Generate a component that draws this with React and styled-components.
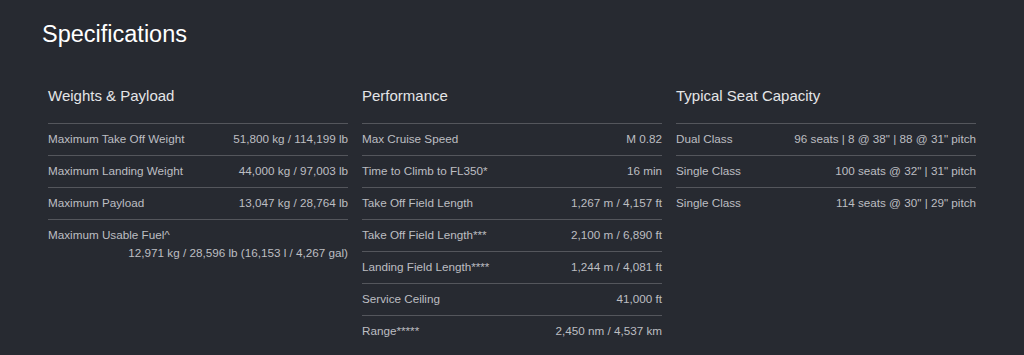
import React from "react";
import styled, { createGlobalStyle } from "styled-components";

const Global = createGlobalStyle`
  html, body { margin: 0; padding: 0; background: #272a31; }
  body { font-family: "Liberation Sans", Arial, sans-serif; }
`;

const Page = styled.div`
  width: 1024px;
  height: 355px;
  box-sizing: border-box;
  padding: 20px 42px 0;
  background: #272a31;
  overflow: hidden;
`;

const Title = styled.h1`
  margin: 0;
  font-size: 23.5px;
  line-height: 28px;
  font-weight: 400;
  color: #ffffff;
`;

const Grid = styled.div`
  display: grid;
  grid-template-columns: repeat(3, 300px);
  column-gap: 14px;
  padding-left: 6px;
  margin-top: 39px;
  align-items: start;
`;

const Section = styled.section`
  display: flex;
  flex-direction: column;
`;

const Heading = styled.h2`
  margin: 0 0 18px;
  font-size: 15px;
  line-height: 18px;
  font-weight: 400;
  color: #e4e5e7;
`;

const Row = styled.div`
  display: flex;
  flex-wrap: wrap;
  justify-content: space-between;
  border-top: 1px solid #54565c;
  padding: 6px 0 7px;
  font-size: 11.7px;
  line-height: 18px;
  color: #bdbec2;
`;

const Label = styled.span`
  white-space: nowrap;
`;

const Value = styled.span`
  margin-left: auto;
  white-space: nowrap;
  text-align: right;
`;

const data = [
  {
    title: "Weights & Payload",
    rows: [
      ["Maximum Take Off Weight", "51,800 kg / 114,199 lb"],
      ["Maximum Landing Weight", "44,000 kg / 97,003 lb"],
      ["Maximum Payload", "13,047 kg / 28,764 lb"],
      ["Maximum Usable Fuel^", "12,971 kg / 28,596 lb (16,153 l / 4,267 gal)"],
    ],
  },
  {
    title: "Performance",
    rows: [
      ["Max Cruise Speed", "M 0.82"],
      ["Time to Climb to FL350*", "16 min"],
      ["Take Off Field Length", "1,267 m / 4,157 ft"],
      ["Take Off Field Length***", "2,100 m / 6,890 ft"],
      ["Landing Field Length****", "1,244 m / 4,081 ft"],
      ["Service Ceiling", "41,000 ft"],
      ["Range*****", "2,450 nm / 4,537 km"],
    ],
  },
  {
    title: "Typical Seat Capacity",
    rows: [
      ["Dual Class", "96 seats | 8 @ 38\" | 88 @ 31\" pitch"],
      ["Single Class", "100 seats @ 32\" | 31\" pitch"],
      ["Single Class", "114 seats @ 30\" | 29\" pitch"],
    ],
  },
];

export default function App() {
  return (
    <>
      <Global />
      <Page>
        <Title>Specifications</Title>
        <Grid>
          {data.map((s) => (
            <Section key={s.title}>
              <Heading>{s.title}</Heading>
              {s.rows.map(([l, v], i) => (
                <Row key={i}>
                  <Label>{l}</Label>
                  <Value>{v}</Value>
                </Row>
              ))}
            </Section>
          ))}
        </Grid>
      </Page>
    </>
  );
}
